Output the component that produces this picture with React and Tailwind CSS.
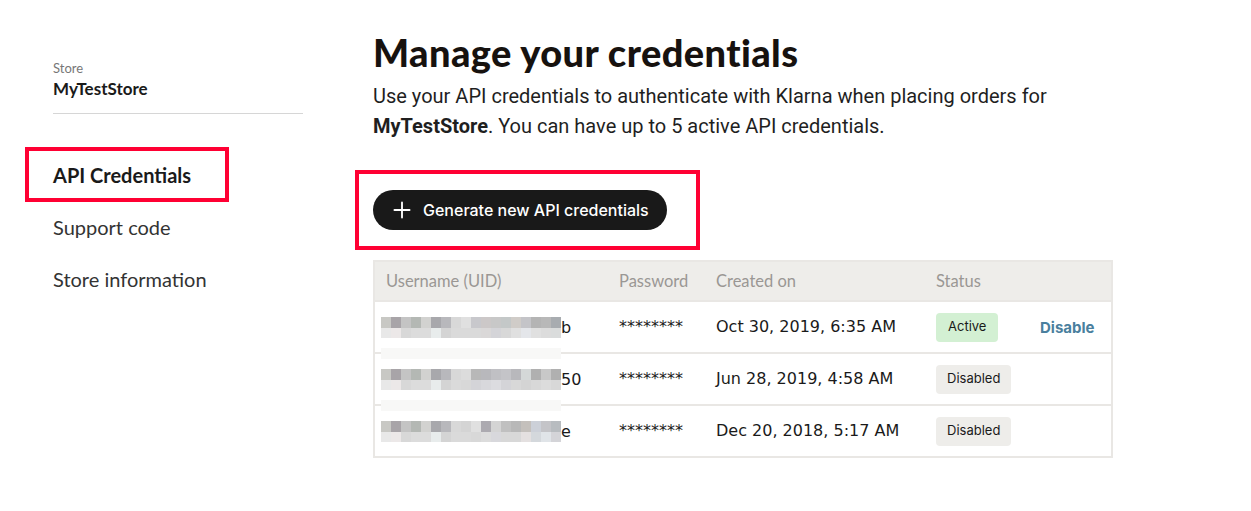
import { Plus } from 'lucide-react'

const mosaics = [
  {
    top: ['#c8c8c4', '#a8a4a8', '#c4c4c4', '#b4b8b4', '#d2d2d0', '#a8a8ac', '#b8b8bc', '#d8d8d8', '#e0e0e0', '#c8c8cc', '#ccc8c8', '#c8c8c8', '#c4c8c8', '#d0ccc8', '#c4c4c8', '#b4b4b4', '#b8b8b8', '#a8acb0'],
    bottom: ['#e8e8e8', '#ece8e8', '#d8d8d8', '#dcdcdc', '#dcdcdc', '#e8ecec', '#d4d4d4', '#dadada', '#dadada', '#dadada', '#dad8d8', '#d4d4d8', '#d8d8d8', '#e0e0e0', '#e4e6ea', '#e0e0e0', '#dcdcdc', '#dadcdc'],
    band: true,
  },
  {
    top: ['#c8c8c4', '#a8a4a8', '#c4c4c4', '#b4b8b4', '#d2d2d0', '#a8a8ac', '#b8b8bc', '#d8d8d8', '#dcdcdc', '#b8b8b8', '#b8b8bc', '#c0c0c4', '#c4c4c8', '#b8b8bc', '#d4d8d8', '#b0b0b0', '#c8c8c8', '#b0b0b0'],
    bottom: ['#e8e8e8', '#ece8e8', '#d8d8d8', '#dcdcdc', '#dcdcdc', '#e8ecec', '#d4d4d4', '#dadada', '#d8d8d8', '#d4d4d8', '#d8d8dc', '#dcdce0', '#d4d4d8', '#d8d8d8', '#d4d4d4', '#d8d8d8', '#dcdcdc', '#d8d8d8'],
    band: true,
  },
  {
    top: ['#c8c8c4', '#a8a4a8', '#c4c4c4', '#b4b8b4', '#d2d2d0', '#a8a8ac', '#b8b8bc', '#d8d8d8', '#d4d4d4', '#e0e0e0', '#acaab0', '#d4d4d4', '#c0c0c0', '#b8b8b8', '#c4c0bc', '#ccd0d8', '#c4c4c8', '#b8bcc0'],
    bottom: ['#e8e8e8', '#ece8e8', '#d8d8d8', '#dcdcdc', '#dcdcdc', '#e8ecec', '#d4d4d4', '#dadada', '#dadada', '#d8d8d8', '#dcdcdc', '#d8d8dc', '#d8d8d8', '#d8d8d8', '#e4e0e0', '#d4d8dc', '#e0e4e8', '#d4d4d8'],
    band: false,
  },
]

const rows = [
  { tail: 'b', date: 'Oct 30, 2019, 6:35 AM', status: 'Active' },
  { tail: '50', date: 'Jun 28, 2019, 4:58 AM', status: 'Disabled' },
  { tail: 'e', date: 'Dec 20, 2018, 5:17 AM', status: 'Disabled' },
]

function Mosaic({ m }) {
  return (
    <span className="relative inline-block w-[180px] h-[21px] align-middle">
      <span className="flex">
        {m.top.map((c, i) => (
          <span key={i} className="w-[10px] h-[11px]" style={{ backgroundColor: c }}></span>
        ))}
      </span>
      <span className="flex">
        {m.bottom.map((c, i) => (
          <span key={i} className="w-[10px] h-[10px]" style={{ backgroundColor: c }}></span>
        ))}
      </span>
      {m.band && <span className="absolute left-0 top-[31px] w-[180px] h-[11px] bg-[#f8f8f7]"></span>}
    </span>
  )
}

export default function App() {
  return (
    <div className="w-[1251px] h-[511px] bg-white flex font-['Lato',sans-serif] text-[#1a1a1a]">
      {/* Sidebar */}
      <aside className="w-[373px] pl-[25px] pt-[61px]">
        <div className="pl-[28px] w-[278px]">
          <div className="text-[13px] text-[#777] leading-[15px]">Store</div>
          <div className="text-[17px] font-bold leading-[22px] mt-[2px] text-[#1a1a1a]">MyTestStore</div>
          <div className="h-px bg-[#d6d6d6] mt-[13px] w-[250px]"></div>
        </div>
        <nav className="mt-[33px] flex flex-col">
          <div className="w-[204px] h-[55px] border-[4px] border-[#ff0033] flex items-center pl-[24px] text-[20px] font-bold text-[#1a1a1a]">
            API Credentials
          </div>
          <div className="pl-[28px] mt-[13px] text-[20px] text-[#333] leading-[24px]">Support code</div>
          <div className="pl-[28px] mt-[28px] text-[20px] text-[#333] leading-[24px]">Store information</div>
        </nav>
      </aside>

      {/* Main */}
      <main className="pt-[30px]">
        <h1 className="text-[38px] font-black leading-[44px] text-[#17120f] tracking-[0.4px]">Manage your credentials</h1>
        <p className="mt-[7px] text-[20px] leading-[30px] text-[#1f1f1f] font-['Roboto',sans-serif] w-[720px]">
          Use your API credentials to authenticate with Klarna when placing orders for{' '}
          <span className="font-bold">MyTestStore</span>. You can have up to 5 active API credentials.
        </p>

        <div className="mt-[29px] -ml-[18px] w-[345px] h-[80px] border-[4px] border-[#ff0033] pl-[14px] pt-[16px]">
          <button className="h-[40px] w-[294px] rounded-full bg-[#191919] text-white flex items-center pl-[16px] gap-[8px] text-[16px] font-medium font-['Inter',sans-serif]">
            <Plus className="w-[26px] h-[26px]" strokeWidth={1.7} />
            Generate new API credentials
          </button>
        </div>

        <table className="mt-[10px] w-[740px] table-fixed border-collapse border-2 border-[#e9e7e4] text-left">
          <colgroup>
            <col className="w-[234px]" />
            <col className="w-[97px]" />
            <col className="w-[220px]" />
            <col className="w-[104px]" />
            <col />
          </colgroup>
          <thead>
            <tr className="bg-[#eeedea] h-[40px]">
              {['Username (UID)', 'Password', 'Created on', 'Status', ''].map((h, i) => (
                <th key={i} className="font-normal text-[16.5px] text-[#9a9794] pl-[11px]">{h}</th>
              ))}
            </tr>
          </thead>
          <tbody>
            {rows.map((r, i) => (
              <tr key={i} className="h-[52px] border-t-2 border-[#e9e7e4]">
                <td className="pl-[6px] text-[16px] font-['DejaVu_Sans',sans-serif] whitespace-nowrap">
                  <Mosaic m={mosaics[i]} />
                  <span className="align-middle">{r.tail}</span>
                </td>
                <td className="pl-[11px] text-[16px] font-['DejaVu_Sans',sans-serif]">********</td>
                <td className="pl-[11px] text-[16px] font-['DejaVu_Sans',sans-serif] whitespace-nowrap">{r.date}</td>
                <td className="pl-[11px]">
                  {r.status === 'Active' ? (
                    <span className="inline-flex items-center h-[29px] px-[12px] rounded-[4px] bg-[#d3f0d3] text-[13px] text-[#1a1a1a] font-['Inter',sans-serif]">Active</span>
                  ) : (
                    <span className="inline-flex items-center h-[29px] px-[11px] rounded-[4px] bg-[#eeedea] text-[13px] text-[#1a1a1a] font-['Inter',sans-serif]">Disabled</span>
                  )}
                </td>
                <td className="pl-[11px]">
                  {r.status === 'Active' && (
                    <span className="text-[15px] font-bold text-[#4a7f9e] font-['Inter',sans-serif]">Disable</span>
                  )}
                </td>
              </tr>
            ))}
          </tbody>
        </table>
      </main>
    </div>
  )
}
